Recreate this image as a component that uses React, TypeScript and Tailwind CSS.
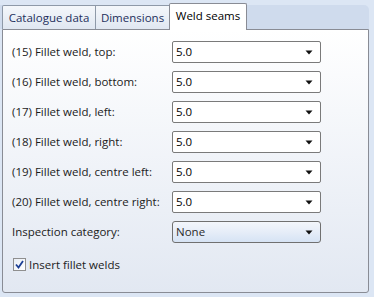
import React from 'react';

const ROWS = [
  '(15) Fillet weld, top:',
  '(16) Fillet weld, bottom:',
  '(17) Fillet weld, left:',
  '(18) Fillet weld, right:',
  '(19) Fillet weld, centre left:',
  '(20) Fillet weld, centre right:',
];

const Arrow: React.FC = () => (
  <svg width="8" height="5" viewBox="0 0 8 5" className="shrink-0">
    <path d="M0.5 0.5 H7.5 L4 4.5 Z" fill="#111" />
  </svg>
);

const Combo: React.FC<{ value: string; readOnly?: boolean }> = ({ value, readOnly }) => (
  <div
    className={
      readOnly
        ? 'w-[149px] h-[22px] flex items-center justify-between pl-[3px] pr-[7px] border border-[#707070] rounded-[3px] bg-gradient-to-b from-[#f3f6fb] via-[#e6edf8] to-[#d6e3f4] text-[#2b2b2b]'
        : 'w-[149px] h-[22px] flex items-center justify-between pl-[3px] pr-[7px] border border-[#7a7a7a] rounded-[2px] bg-white text-black'
    }
  >
    <span>{value}</span>
    <Arrow />
  </div>
);

const App: React.FC = () => {
  return (
    <div className="w-[374px] h-[297px] bg-[#dce6f4] pt-[5px] overflow-hidden text-[11.5px] leading-none font-['Open_Sans',sans-serif] text-[#1b1b1b]">
      <div className="w-[369px]">
        {/* tab strip */}
        <div className="h-[24px] bg-[#cfdbed] rounded-tr-[5px] flex items-end pl-[2px]">
          <div className="w-[94px] h-[24px] flex items-center justify-center border border-b-0 border-[#8e99a8] rounded-tl-[2px] bg-gradient-to-b from-[#f4f7fb] to-[#e0e7f1] text-[#1e2f5c]">
            Catalogue data
          </div>
          <div className="w-[73px] h-[24px] flex items-center justify-center border-t border-[#8e99a8] bg-gradient-to-b from-[#f4f7fb] to-[#e0e7f1] text-[#1e2f5c]">
            Dimensions
          </div>
          <div className="relative z-10 w-[78px] h-[27px] -mb-[1px] flex items-start justify-center pt-[6px] border border-b-0 border-[#898c95] rounded-t-[2px] bg-white text-black">
            Weld seams
          </div>
        </div>

        {/* panel */}
        <div className="ml-[2px] h-[264px] border border-[#898c95] rounded-b-[3px] bg-gradient-to-b from-white to-[#e2e8f2] pt-[11px] pl-[9px]">
          <div className="flex flex-col gap-[8px]">
            {ROWS.map((label) => (
              <div key={label} className="flex items-center h-[22px]">
                <span className="w-[160px]">{label}</span>
                <Combo value="5.0" />
              </div>
            ))}
            <div className="flex items-center h-[22px]">
              <span className="w-[160px]">Inspection category:</span>
              <Combo value="None" readOnly />
            </div>
          </div>

          <label className="mt-[15px] flex items-center gap-[3px] pl-[1px]">
            <span className="w-[13px] h-[13px] border border-[#8f8f8f] bg-gradient-to-br from-[#e9eef5] to-white flex items-center justify-center">
              <svg width="9" height="9" viewBox="0 0 9 9">
                <path d="M1 4.5 L3.5 7.5 L8 1" fill="none" stroke="#1c3f95" strokeWidth="1.8" />
              </svg>
            </span>
            <span>Insert fillet welds</span>
          </label>
        </div>
      </div>
    </div>
  );
};

export default App;
